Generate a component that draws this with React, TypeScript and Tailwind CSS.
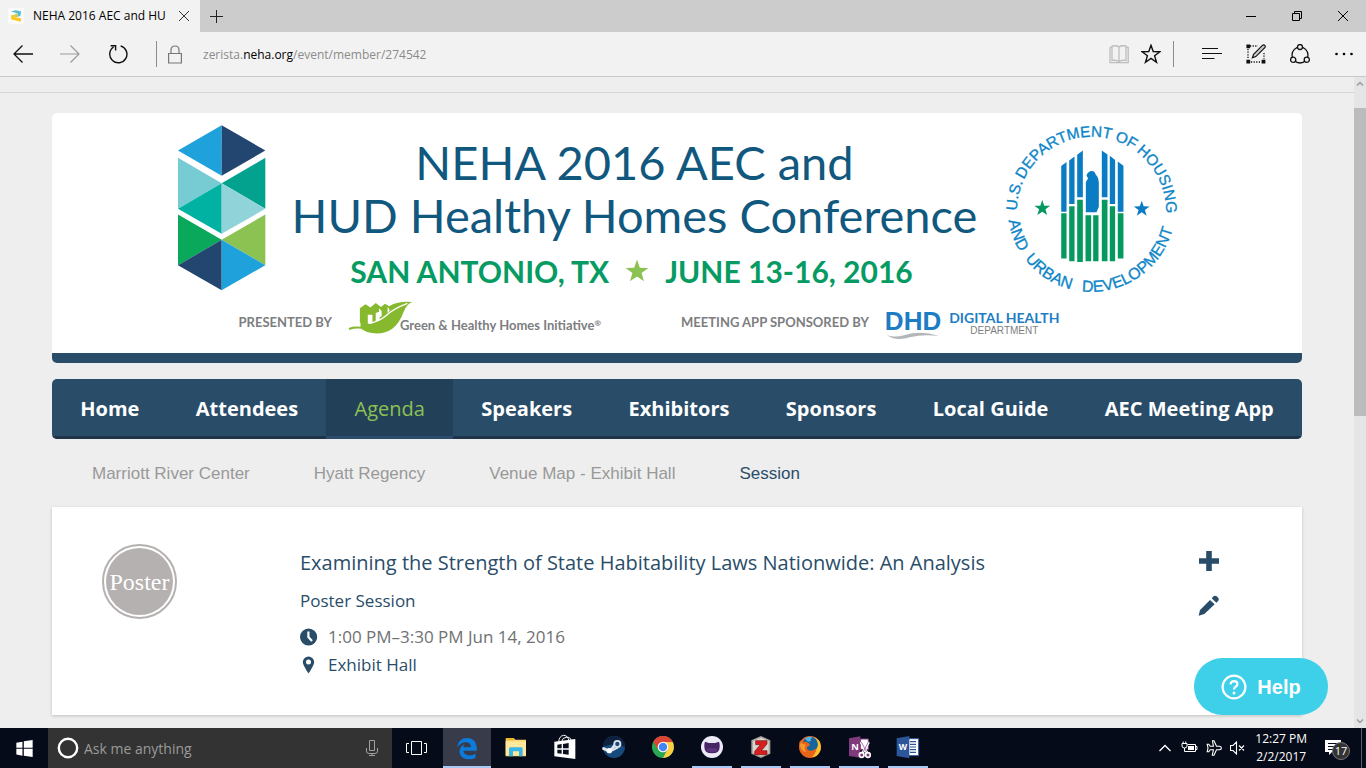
import type { ReactNode } from "react";

const ui = "font-['Open_Sans','Noto_Sans',sans-serif]";

function Icon({ box, w, h, children }: { box: string; w: number; h: number; children: ReactNode }) {
  return (
    <svg viewBox={box} width={w} height={h} className="block shrink-0" aria-hidden="true">
      {children}
    </svg>
  );
}

const star = (cx: number, cy: number, r: number) =>
  Array.from({ length: 10 }, (_, i) => {
    const a = (Math.PI / 5) * i - Math.PI / 2;
    const q = i % 2 ? r * 0.4 : r;
    return `${(cx + q * Math.cos(a)).toFixed(2)},${(cy + q * Math.sin(a)).toFixed(2)}`;
  }).join(" ");

function TabBar() {
  return (
    <div className="flex h-8 shrink-0 items-stretch bg-[#cccccc] text-black">
      <div className="flex w-[200px] items-center bg-[#f2f2f2] pl-2">
        <Icon box="0 0 16 16" w={16} h={16}>
          <rect width="16" height="16" rx="2" fill="#fafafa" />
          <path d="M3 3.2 L8 2.2 L13.2 3.6 L12.4 7.8 L9.6 9 L9.8 5.8 Z" fill="#5bbccf" />
          <path d="M3 7.6 L6.4 6.6 L6.6 9 L13.2 10.6 L12.6 13.8 L8 12.4 L3.4 11.4Z" fill="#fbc71c" />
          <path d="M6.4 6.6 L9.8 5.8 L9.6 9 L6.6 9Z" fill="#c9c95a" />
        </Icon>
        <span className="ml-[9px] w-[135px] overflow-hidden text-xs whitespace-nowrap">NEHA 2016 AEC and HU</span>
        <button aria-label="Close tab" className="ml-2.5">
          <Icon box="0 0 12 12" w={12} h={12}>
            <path d="M1 1 L11 11 M11 1 L1 11" stroke="#333" strokeWidth="1" />
          </Icon>
        </button>
      </div>
      <button aria-label="New tab" className="px-2.5">
        <Icon box="0 0 13 13" w={13} h={13}>
          <path d="M6.5 0 V13 M0 6.5 H13" stroke="#222" />
        </Icon>
      </button>
      <div className="ml-auto flex">
        <button aria-label="Minimize" className="flex w-[46px] items-center justify-center">
          <Icon box="0 0 10 10" w={10} h={10}>
            <path d="M0 5.5 H10" stroke="#000" />
          </Icon>
        </button>
        <button aria-label="Restore" className="flex w-[46px] items-center justify-center">
          <Icon box="0 0 10 10" w={10} h={10}>
            <path d="M.5 2.5 H7.5 V9.5 H.5Z M2.5 2.5 V.5 H9.5 V7.5 H7.5" fill="none" stroke="#000" />
          </Icon>
        </button>
        <button aria-label="Close" className="flex w-[46px] items-center justify-center">
          <Icon box="0 0 10 10" w={10} h={10}>
            <path d="M0 0 L10 10 M10 0 L0 10" stroke="#000" />
          </Icon>
        </button>
      </div>
    </div>
  );
}

function Toolbar() {
  return (
    <div className="flex h-[45px] shrink-0 items-center border-b border-[#c9c9c9] bg-[#f2f2f2]">
      <button aria-label="Back" className="flex w-[46px] justify-center">
        <Icon box="0 0 20 18" w={20} h={18}>
          <path d="M20 9 H1 M9.5 .5 L1 9 L9.5 17.5" fill="none" stroke="#111" strokeWidth="1.3" />
        </Icon>
      </button>
      <button aria-label="Forward" className="flex w-12 justify-center">
        <Icon box="0 0 20 18" w={20} h={18}>
          <path d="M0 9 H19 M10.5 .5 L19 9 L10.5 17.5" fill="none" stroke="#9a9a9a" strokeWidth="1.2" />
        </Icon>
      </button>
      <button aria-label="Refresh" className="flex w-12 justify-center">
        <Icon box="0 0 20 20" w={20} h={20}>
          <path d="M12.6 1.9 A8.6 8.6 0 1 1 5.6 3 M2.6 1.8 H7.6 V6.6" fill="none" stroke="#111" strokeWidth="1.4" />
        </Icon>
      </button>
      <div className="ml-[14px] h-[26px] w-px bg-[#8c8c8c]" />
      <div className="ml-[11px]">
        <Icon box="0 0 14 19" w={14} h={19}>
          <path d="M.6 8.5 H13.4 V18 H.6Z M3 8.5 V5 Q3 1 7 1 T11 5 V8.5" fill="none" stroke="#777" strokeWidth="1.2" />
        </Icon>
      </div>
      <button aria-label="Address" className="ml-[21px] pt-0.5 text-left text-xs text-[#8b8b8b]">
        zerista.<span className="text-black">neha.org</span>/event/member/274542
      </button>
      <div className="ml-auto flex items-center">
        <button aria-label="Reading view" className="flex w-8 justify-center">
          <Icon box="0 0 20 19" w={20} h={19}>
            <path d="M1 2.5 H3 M17 2.5 H19.2 V17.6 H1 V2.5 M3 1 Q8 .2 10 2 Q12 .2 17 1 V15.4 Q12 14.8 10 16.6 Q8 14.8 3 15.4Z M10 2 V17.5" fill="none" stroke="#bdbdbd" strokeWidth="1.3" />
          </Icon>
        </button>
        <button aria-label="Add to favorites" className="flex w-8 justify-center">
          <Icon box="0 0 20 20" w={20} h={20}>
            <polygon points={star(10, 10.6, 9.4)} fill="none" stroke="#111" strokeWidth="1.4" />
          </Icon>
        </button>
        <div className="ml-1.5 h-[26px] w-px bg-[#8c8c8c]" />
        <div className="w-4" />
        <button aria-label="Hub" className="flex w-11 justify-center">
          <Icon box="0 0 20 12" w={20} h={12}>
            <path d="M0 .5 H16 M0 5.5 H20 M0 10.5 H12.5" stroke="#111" strokeWidth="1.2" />
          </Icon>
        </button>
        <button aria-label="Make a web note" className="flex w-11 justify-center">
          <Icon box="0 0 20 20" w={20} h={20}>
            <path d="M4 2 H12 M2 5 V15 M5 18 H15 M18 9 V15" stroke="#111" strokeWidth="1.3" strokeDasharray="1.2 1.4" fill="none" />
            <path d="M.4 .4 H4.2 V4.2 H.4Z M.4 15.8 H4.2 V19.4 H.4Z M15.6 15.8 H19.4 V19.4 H15.6Z" fill="#111" />
            <path d="M6.4 13.8 L7.6 10.4 L16.4 1.4 Q17.8 .5 18.8 1.4 Q19.7 2.4 18.8 3.6 L9.8 12.6Z" fill="#ccc" stroke="#111" strokeWidth="1.2" />
          </Icon>
        </button>
        <button aria-label="Share" className="flex w-11 justify-center">
          <Icon box="0 0 20 20" w={20} h={20}>
            <circle cx="10" cy="11" r="8" fill="none" stroke="#111" strokeWidth="1.3" />
            <g fill="#f2f2f2" stroke="#111" strokeWidth="1.3">
              <circle cx="10" cy="3" r="2.5" />
              <circle cx="3.2" cy="15.8" r="2.6" />
              <circle cx="16.8" cy="15.8" r="2.6" />
            </g>
          </Icon>
        </button>
        <button aria-label="More actions" className="flex w-11 justify-center">
          <Icon box="0 0 18 4" w={18} h={4}>
            <circle cx="1.5" cy="2" r="1.3" /><circle cx="9" cy="2" r="1.3" /><circle cx="16.5" cy="2" r="1.3" />
          </Icon>
        </button>
      </div>
    </div>
  );
}

function HexLogo() {
  return (
    <Icon box="52 28 270 500" w={90} h={167}>
      <path d="M186 31 L55 107 L186 183Z" fill="#1fa2db" />
      <path d="M186 31 L317 107 L186 183Z" fill="#22466f" />
      <path d="M55 129 L186 205 L55 282Z" fill="#77ccd3" />
      <path d="M317 129 L186 205 L317 282Z" fill="#02a28f" />
      <path d="M186 205 L55 282 L186 357Z" fill="#01b1a2" />
      <path d="M186 205 L317 282 L186 357Z" fill="#90d4da" />
      <path d="M55 299 L186 375 L55 451Z" fill="#09a85a" />
      <path d="M317 299 L186 375 L317 451Z" fill="#8cc251" />
      <path d="M186 375 L55 451 L186 526Z" fill="#22466f" />
      <path d="M186 375 L317 451 L186 526Z" fill="#1fa2db" />
    </Icon>
  );
}

function HudSeal() {
  return (
    <svg viewBox="42 28 520 510" width={173} height={170} className="block shrink-0 overflow-visible" role="img" aria-label="U.S. Department of Housing and Urban Development">
      <defs>
        <path id="arcTop" d="M78 290 A224 224 0 1 1 526 290" />
        <path id="arcBottom" d="M50 280 A252 252 0 0 0 554 280" />
      </defs>
      <g fill="#0e86c8" stroke="#0e86c8" strokeWidth="1" fontFamily="Liberation Sans, sans-serif" fontSize="46">
        <text><textPath href="#arcTop" startOffset="2">U.S.</textPath></text>
        <text><textPath href="#arcTop" startOffset="98">DEPARTMENT</textPath></text>
        <text><textPath href="#arcTop" startOffset="422">OF</textPath></text>
        <text><textPath href="#arcTop" startOffset="495">HOUSING</textPath></text>
        <g fontSize="48">
          <text><textPath href="#arcBottom" startOffset="38">AND</textPath></text>
          <text><textPath href="#arcBottom" startOffset="164">URBAN</textPath></text>
          <text><textPath href="#arcBottom" startOffset="366">DEVELOPMENT</textPath></text>
        </g>
      </g>
      <g fill="#0a7cc4">
        <path d="M211 154 L227 142 V291 H211Z M235 137 L251 125 V268 H235Z M259 120 L276 107 V248 H259Z" />
        <path d="M333 107 L350 119 V248 H333Z M357 123 L373 136 V268 H357Z M381 140 L398 153 V291 H381Z" />
        <path d="M285 293 V205 Q286 197 292 191 L287 183 Q291 169 304 169 Q312 170 315 180 Q323 186 324 205 V276 L317 293Z" />
        <polygon points={star(453, 283, 25)} />
      </g>
      <g fill="#06995f">
        <path d="M211 296 H227 V432 H211Z M235 275 H251 V440 H235Z M259 255 H276 V442 H259Z M284 302 H301 V440 H284Z M307 302 H323 V440 H307Z M333 255 H350 V440 H333Z M357 275 H373 V440 H357Z M381 296 H398 V432 H381Z" />
        <polygon points={star(154, 281, 25)} />
      </g>
    </svg>
  );
}

function Banner() {
  return (
    <header className="flex min-h-[250px] flex-col rounded-[5px] border-b-10 border-[#294d69] bg-white pt-[11px] font-[Lato,'Open_Sans',sans-serif]">
      <div className="flex justify-center gap-[26px]">
        <HexLogo />
        <div className="flex w-[686px] flex-col items-center whitespace-nowrap">
          <h1 className="mt-3 mr-0.5 text-center text-[47px] leading-[53px] text-[#11587f]">
            NEHA 2016 AEC and
            <br />
            HUD Healthy Homes Conference
          </h1>
          <p className="mt-3 mr-2 flex items-center gap-4 text-[30px] leading-[34px] font-bold text-[#069b63]">
            SAN ANTONIO, TX
            <Icon box="0 0 24 24" w={24} h={24}>
              <polygon points={star(12, 12.6, 12)} fill="#8cc251" />
            </Icon>
            JUNE 13-16, 2016
          </p>
        </div>
        <HudSeal />
      </div>
      <div className="flex items-center justify-center pr-14 text-[13px] font-bold whitespace-nowrap text-[#7d7e80]">
        <span className="pt-3">PRESENTED BY</span>
        <div className="ml-4 flex items-end">
          <Icon box="556 542 200 104" w={66} h={35}>
            <path d="M558 626 Q572 620 594 622 V612 Q590 604 592 598 V566 L609 554 L624 564 L640 550 L656 562 L668 552 L681 560 Q706 543 751 547 Q734 552 724 578 Q712 612 690 628 Q668 644 636 642 Q612 640 596 628 Q576 626 560 632Z" fill="#87b92f" />
            <path d="M618 612 Q648 608 672 588 Q692 568 736 551" fill="none" stroke="#fff" strokeWidth="4" />
            <path d="M616 586 H630 V612 H616Z M640 580 L652 576 V602 L640 606Z M676 562 L683 572 L676 582Z M650 566 L658 574 V590 L650 594Z" fill="#fff" />
          </Icon>
          <span className="-ml-3.5 leading-5">
            Green &amp; Healthy Homes Initiative<sup className="text-[8px]">®</sup>
          </span>
        </div>
        <span className="ml-20 pt-3">MEETING APP SPONSORED BY</span>
        <div className="ml-4 flex flex-col pt-4 font-['Liberation_Sans',sans-serif] text-[26px] leading-[22px] text-[#1d7dc4]">
          DHD
          <Icon box="0 0 56 8" w={56} h={8}>
            <path d="M2 3 Q9 6 20 3 Q36 -2 54 4 Q38 2 26 5 Q10 10 2 3Z" fill="#b3b6b8" />
          </Icon>
        </div>
        <div className="ml-2 flex flex-col items-center pt-3">
          <span className="text-sm leading-4 text-[#1d7dc4]">DIGITAL HEALTH</span>
          <span className="font-['Liberation_Sans',sans-serif] text-[10px] leading-[10px] font-normal">DEPARTMENT</span>
        </div>
      </div>
    </header>
  );
}

const sections = ["Home", "Attendees", "Agenda", "Speakers", "Exhibitors", "Sponsors", "Local Guide", "AEC Meeting App"];
const pages = ["Marriott River Center", "Hyatt Regency", "Venue Map - Exhibit Hall", "Session"];

function SiteNav() {
  return (
    <>
      <nav className="mt-4 flex h-[60px] justify-between overflow-hidden rounded-[5px] bg-[#294d69] text-xl whitespace-nowrap">
        {sections.map((s) => (
          <a
            key={s}
            href="#"
            className={
              s === "Agenda"
                ? "flex grow items-center justify-center border-b-3 border-[#2b4c6c] bg-[#234059] pt-0.5 text-[#8cc251]"
                : "flex grow items-center justify-center border-b-3 border-[#1f3448] pt-0.5 font-bold text-white"
            }
          >
            {s}
          </a>
        ))}
      </nav>
      <nav className="flex h-[68px] items-center gap-16 px-10 pt-0.5 font-['Liberation_Sans',sans-serif] text-[17px]">
        {pages.map((p) => (
          <a key={p} href="#" className={p === "Session" ? "text-[#294d69]" : "text-[#999999]"}>
            {p}
          </a>
        ))}
      </nav>
    </>
  );
}

function SessionCard() {
  return (
    <article className="flex h-52 bg-white px-[50px] pt-[37px] text-[17px] text-[#294d69] shadow-[0_1px_3px_rgba(0,0,0,0.2)]">
      <div className="flex size-[75px] shrink-0 items-center justify-center rounded-full border-2 border-[#b5b1b0] p-0.5">
        <div className="flex size-full items-center justify-center rounded-full bg-[#b5b1b0] font-['Liberation_Serif',serif] text-2xl text-white">
          Poster
        </div>
      </div>
      <div className="ml-[123px]">
        <h2 className="mt-[3px] text-xl leading-8">Examining the Strength of State Habitability Laws Nationwide: An Analysis</h2>
        <p className="mt-2 leading-7">Poster Session</p>
        <p className="mt-2 flex items-center gap-2.5 leading-7 text-[#6f7173]">
          <Icon box="0 0 18 18" w={18} h={18}>
            <circle cx="8.6" cy="9" r="8.6" fill="#294d69" />
            <path d="M8.4 3.5 V9 L12 13" fill="none" stroke="#fff" strokeWidth="2.2" />
          </Icon>
          1:00 PM–3:30 PM Jun 14, 2016
        </p>
        <p className="flex items-center gap-2.5 leading-7">
          <Icon box="0 0 18 18" w={18} h={18}>
            <path fillRule="evenodd" d="M8.5 .5 A5.7 5.7 0 0 1 14.2 6.2 Q14.1 9 8.5 17.5 Q2.9 9 2.8 6.2 A5.7 5.7 0 0 1 8.5 .5Z M8.5 3.6 A2.5 2.5 0 1 0 8.5 8.6 A2.5 2.5 0 1 0 8.5 3.6Z" fill="#294d69" />
          </Icon>
          Exhibit Hall
        </p>
      </div>
      <div className="mt-1.5 mr-8 ml-auto flex flex-col gap-[23px]">
        <button aria-label="Add to my agenda">
          <Icon box="0 0 22 22" w={22} h={22}>
            <path d="M8.2 1 H13.8 V8.2 H21 V13.8 H13.8 V21 H8.2 V13.8 H1 V8.2 H8.2Z" fill="#294d69" />
          </Icon>
        </button>
        <button aria-label="Edit notes">
          <Icon box="145 196 66 66" w={22} h={22}>
            <path d="M147 258 L151 241 L181 211 L195 224 L164 253Z M186 206 L193 199 Q197 197 201 200 L206 205 Q209 209 206 213 L200 219Z" fill="#294d69" />
          </Icon>
        </button>
      </div>
    </article>
  );
}

function Scrollbar() {
  return (
    <div className="flex w-3 shrink-0 flex-col items-center justify-between bg-[#e5e5e5]">
      <div className="flex w-full flex-col items-center">
        <div className="flex h-[31px] pt-1">
          <Icon box="0 0 8 5" w={8} h={5}><path d="M1 4.5 L4 1.5 L7 4.5" fill="none" stroke="#999" strokeWidth="1.4" /></Icon>
        </div>
        <div className="h-[308px] w-full bg-[#bcbcbc]" />
      </div>
      <div className="pb-1">
        <Icon box="0 0 8 5" w={8} h={5}><path d="M1 .5 L4 3.5 L7 .5" fill="none" stroke="#999" strokeWidth="1.4" /></Icon>
      </div>
    </div>
  );
}

const apps: { name: string; open: boolean; art: ReactNode }[] = [
  {
    name: "File Explorer", open: false,
    art: <>
      <path d="M77 43 H102 L106 47 H138 V97 H77Z" fill="#f7d774" />
      <path d="M77 52 H138 V94 H77Z" fill="#ffe79b" />
      <path d="M80 42 H102 V49 H80Z" fill="#f0b429" />
      <path d="M87 97 V74 Q87 70 92 70 H123 Q128 70 128 74 V97 H117 V82 H99 V97Z" fill="#38b6e8" />
    </>,
  },
  {
    name: "Store", open: false,
    art: <g transform="translate(-146 0)">
      <path d="M222 53 L285 45 V105 L222 97Z" fill="#fff" />
      <path d="M235 55 Q236 36 250 34 Q262 34 266 50 M244 52 Q247 40 258 40 Q270 38 273 50" fill="none" stroke="#fff" strokeWidth="3" />
      <path d="M231 62 L244 60 V73 H231Z M248 60 L265 57 V73 H248Z M231 77 H244 V89 L231 88Z M248 77 H265 V92 L248 90Z" fill="#0a0f1d" />
    </g>,
  },
  {
    name: "Steam", open: false,
    art: <g transform="translate(-294 0)">
      <circle cx="402" cy="69" r="33" fill="#164a7c" />
      <path d="M369 69 A33 33 0 0 1 435 69 Q402 52 369 69Z" fill="#10203f" />
      <path d="M371 74 L390 82 L406 62" fill="none" stroke="#dbe4ec" strokeWidth="9" strokeLinecap="round" />
      <circle cx="412" cy="60" r="12" fill="#dbe4ec" /><circle cx="412" cy="60" r="6.5" fill="#164a7c" />
      <circle cx="388" cy="80" r="8" fill="#fff" /><path d="M396 80 L414 70" stroke="#dbe4ec" strokeWidth="6" />
    </g>,
  },
  {
    name: "Chrome", open: false,
    art: <g transform="translate(-441 0)">
      <circle cx="549" cy="69" r="33" fill="#2aa655" />
      <path d="M549 69 L520 53 A33 33 0 0 1 578 53Z" fill="#dc4437" />
      <path d="M520 53 L535 77 L549 69 L560 53Z" fill="#dc4437" />
      <path d="M549 54 H578 A33 33 0 0 1 549 102 L562 77Z" fill="#fecd42" />
      <circle cx="549" cy="69" r="16" fill="#fff" /><circle cx="549" cy="69" r="12.5" fill="#4285f4" />
    </g>,
  },
  {
    name: "GitHub", open: true,
    art: <g transform="translate(-588 0)">
      <circle cx="696" cy="69" r="33" fill="#eceaf6" />
      <path d="M675 53 L687 57 H705 L717 53 Q720 60 719 68 Q719 88 696 88 Q673 88 673 68 Q672 60 675 53Z" fill="#472664" />
      <path d="M679 75 Q696 69 713 75 Q710 85 696 85 Q682 85 679 75Z" fill="#5b347d" />
    </g>,
  },
  {
    name: "Zotero", open: true,
    art: <g transform="translate(-735 0)">
      <path d="M843 36 L871 49 V89 L843 102 L814 89 V49Z" fill="#aaa59f" />
      <path d="M843 41 L866 52 V87 L843 97 L819 87 V52Z" fill="#d8d6d2" />
      <path d="M827 50 H861 V60 L844 80 H861 V92 H824 V82 L841 62 H827Z" fill="#d61e20" stroke="#7e1212" strokeWidth="2" />
    </g>,
  },
  {
    name: "Firefox", open: true,
    art: <g transform="translate(-882 0)">
      <circle cx="990" cy="69" r="33" fill="#e8641b" />
      <path d="M1000 38 Q1028 48 1021 80 Q1012 99 996 99 Q1018 84 1000 38Z" fill="#fdc52b" />
      <circle cx="991" cy="61" r="23" fill="#17649f" />
      <path d="M974 44 Q985 35 999 41 Q990 44 993 50 Q983 56 980 49Z" fill="#4cb6e8" />
      <path d="M958 55 Q965 42 969 55 Q979 50 988 59 Q993 64 983 68 Q978 72 984 78 Q996 84 1011 72 Q1005 94 985 94 Q957 87 958 55Z" fill="#e8641b" />
      <path d="M960 62 Q965 48 967 60 L978 62 Q969 70 979 84 Q963 82 960 62Z" fill="#f8992d" />
    </g>,
  },
  {
    name: "OneNote clipping", open: true,
    art: <g transform="translate(-1029 0)">
      <path d="M1107 43 L1141 37 V101 L1107 96Z" fill="#80397b" />
      <path d="M1141 45 H1165 V76 H1141Z" fill="#fff" stroke="#80397b" strokeWidth="3" />
      <text x="1114" y="79" fontSize="28" fontWeight="700" fontFamily="Open Sans, sans-serif" fill="#fff">N</text>
      <path d="M1143 54 L1162 88 M1166 54 L1147 88" stroke="#fff" strokeWidth="8" />
      <path d="M1144 54 L1161 86 M1165 54 L1148 86" stroke="#80397b" strokeWidth="2" />
      <g fill="#80397b" stroke="#fff" strokeWidth="5"><circle cx="1145" cy="93" r="7" /><circle cx="1164" cy="93" r="7" /></g>
    </g>,
  },
  {
    name: "Word", open: true,
    art: <g transform="translate(-1176 0)">
      <path d="M1285 44 H1316 V95 H1285Z" fill="#fff" stroke="#2b579a" strokeWidth="3" />
      <path d="M1290 53 H1308 M1290 61 H1308 M1290 69 H1308 M1290 77 H1308 M1290 85 H1308" stroke="#2b579a" strokeWidth="3.5" />
      <path d="M1250 43 L1288 36 V103 L1250 96Z" fill="#2b579a" />
      <text x="1256" y="79" fontSize="26" fontWeight="700" fontFamily="Open Sans, sans-serif" fill="#fff">W</text>
    </g>,
  },
];

function Taskbar() {
  return (
    <footer className="flex h-10 shrink-0 items-stretch bg-[#060b19] text-white">
      <button aria-label="Start" className="flex w-12 items-center justify-center">
        <Icon box="47 44 50 50" w={17} h={17}>
          <path d="M48 52 L66 49 V67 H48Z M70 48 L96 44 V67 H70Z M48 70 H66 V90 L48 87Z M70 70 H96 V94 L70 90Z" fill="#fff" />
        </Icon>
      </button>
      <label className="flex w-[344px] items-center bg-[#333333] pr-3 pl-2">
        <Icon box="0 0 24 24" w={24} h={24}>
          <circle cx="12" cy="12" r="9.2" fill="none" stroke="#fff" strokeWidth="2.4" />
        </Icon>
        <input
          aria-label="Search"
          placeholder="Ask me anything"
          className="ml-1 min-w-0 grow bg-transparent pt-0.5 text-sm outline-none placeholder:text-[#9a9a9a]"
        />
        <Icon box="0 0 16 18" w={16} h={18}>
          <path d="M5.5 1.5 H10.5 V11.5 H5.5Z M2.5 9 V12 Q2.5 14.5 5 14.5 H11 Q13.5 14.5 13.5 12 V9 M8 14.5 V17 M5 16.5 H11" fill="none" stroke="#a0a0a0" />
        </Icon>
      </label>
      <button aria-label="Task view" className="mr-0.5 flex w-[49px] items-center justify-center">
        <Icon box="0 0 21 14" w={21} h={14}>
          <path d="M5.5 .5 H15.5 V13.5 H5.5Z M3 2.5 H.5 V11.5 H3 M18 2.5 H20.5 V11.5 H18" fill="none" stroke="#fff" />
        </Icon>
      </button>
      <button aria-label="Microsoft Edge" className="flex w-12 items-center justify-center border-b-2 border-[#a9c8f5] bg-[#383c4a] pt-0.5">
        <Icon box="1368 34 66 70" w={22} h={23}>
          <path d="M1371 66 Q1374 37 1402 37 Q1432 38 1431 76 H1390 Q1392 90 1408 90 Q1419 90 1427 85 V97 Q1418 102 1406 102 Q1380 101 1378 79 Q1378 63 1394 55 Q1390 60 1390 65 H1413 Q1413 51 1400 50 Q1381 50 1371 66Z" fill="#0b7bdc" />
        </Icon>
      </button>
      {apps.map((a) => (
        <button key={a.name} aria-label={a.name} className="flex w-[49px] flex-col items-center justify-between">
          <Icon box="72 12 72 108" w={24} h={36}>{a.art}</Icon>
          <span className={a.open ? "h-0.5 w-10 bg-[#a9c8f5]" : "h-0.5 w-10"} />
        </button>
      ))}
      <div className="ml-auto flex items-center">
        <Icon box="0 0 12 8" w={12} h={8}><path d="M.5 7 L6 1.5 L11.5 7" fill="none" stroke="#fff" strokeWidth="1.3" /></Icon>
        <div className="ml-2.5"><Icon box="0 0 17 14" w={17} h={14}>
          <path d="M6.5 3.5 H14.5 V10.5 H3.5 V7 M14.5 5.5 H16 V8.5 H14.5 M1 2.5 H6 V5 Q6 7 3.5 7 Q1 7 1 5Z M2.2 .5 V2.5 M4.8 .5 V2.5" fill="none" stroke="#fff" />
          <path d="M7 5 H13 V9 H7Z" fill="#fff" />
        </Icon></div>
        <div className="ml-2"><Icon box="0 0 16 16" w={16} h={16}>
          <path d="M6.5 .8 L8 .8 L10.5 6.2 H13.5 Q15.4 6.4 15.4 8 Q15.4 9.6 13.5 9.8 H10.5 L8 15.2 H6.3 L7.4 9.8 H4.2 L2.8 11.8 H1.2 L2 8 L1.2 4.2 H2.8 L4.2 6.2 H7.4Z" fill="none" stroke="#fff" strokeWidth="1.1" />
        </Icon></div>
        <div className="ml-2"><Icon box="0 0 15 14" w={15} h={14}>
          <path d="M.5 4.5 H3 L6.5 1 V13 L3 9.5 H.5Z M9 4.5 L14 9.5 M14 4.5 L9 9.5" fill="none" stroke="#fff" strokeWidth="1.1" />
        </Icon></div>
        <div className="ml-2.5 text-center text-xs leading-[18px]">
          <div>12:27 PM</div>
          <div>2/2/2017</div>
        </div>
        <button aria-label="17 new notifications" className="relative mr-2.5 ml-[18px] size-[26px]">
          <Icon box="0 0 17 16" w={17} h={16}>
            <path d="M0 0 H16 V12 H7 L4 15 V12 H0Z" fill="#fff" />
            <path d="M3 3.5 H13 M3 6.5 H13 M3 9.5 H9" stroke="#060b19" />
          </Icon>
          <span className="absolute top-[7px] left-[7px] flex size-[18px] items-center justify-center rounded-full border border-[#777] bg-[#333] text-[11px] leading-4">17</span>
        </button>
        <div className="mr-1 h-10 w-px bg-[#5a5e6a]" />
      </div>
    </footer>
  );
}

export default function App() {
  return (
    <div className={`flex h-screen flex-col overflow-hidden bg-[#eeeeee] ${ui}`}>
      <TabBar />
      <Toolbar />
      <div className="relative flex min-h-0 grow overflow-hidden">
        <main className="min-w-0 grow">
          <div className="mb-5 h-4 border-b border-[#d6d6d6]" />
          <div className="px-[52px]">
            <Banner />
            <SiteNav />
            <SessionCard />
          </div>
        </main>
        <Scrollbar />
        <button className="absolute right-[38px] bottom-[13px] flex h-[57px] w-[134px] items-center justify-center gap-2.5 rounded-full bg-[#3dd0e8] font-['Liberation_Sans',sans-serif] text-xl font-bold text-white">
          <Icon box="0 0 26 26" w={26} h={26}>
            <circle cx="13" cy="13" r="11.4" fill="none" stroke="#fff" strokeWidth="2.2" />
            <path d="M9.6 10.4 Q9.8 7.2 13 7.2 Q16.4 7.3 16.4 10.2 Q16.3 11.7 14.6 12.7 Q13 13.8 13 15.6" fill="none" stroke="#fff" strokeWidth="2.2" />
            <circle cx="13" cy="19" r="1.5" fill="#fff" />
          </Icon>
          Help
        </button>
      </div>
      <Taskbar />
    </div>
  );
}
